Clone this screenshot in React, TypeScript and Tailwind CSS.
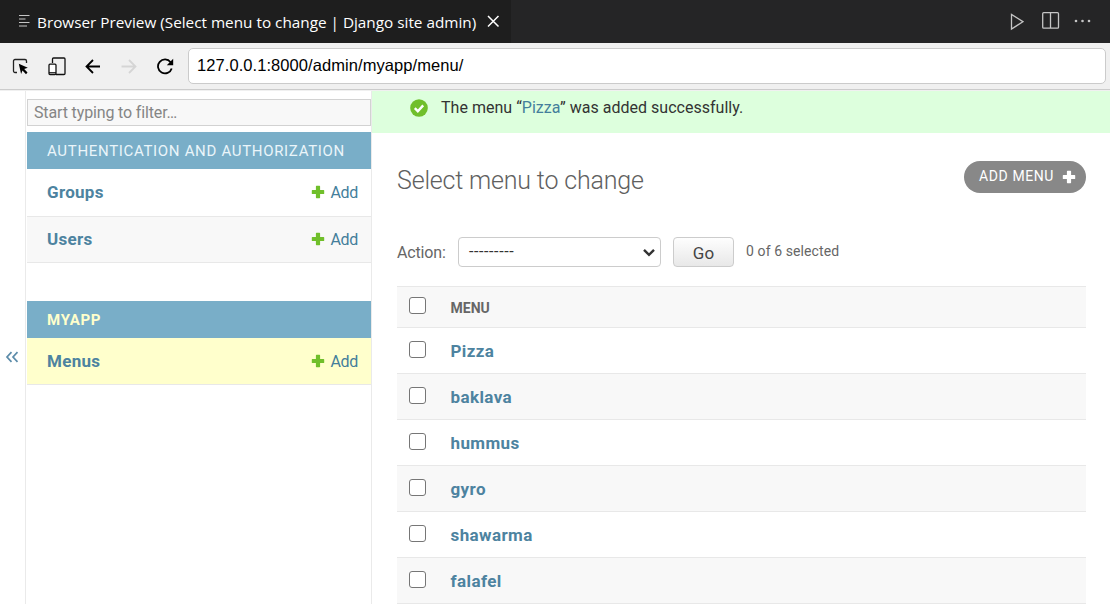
import type { ReactNode } from "react";

const items = ["Pizza", "baklava", "hummus", "gyro", "shawarma", "falafel"];

function Plus({ className }: { className: string }) {
  return (
    <svg viewBox="0 0 14 14" className={className} fill="currentColor">
      <path d="M5.5 0.8h3a.6.6 0 0 1 .6.6v3.5h3.5a.6.6 0 0 1 .6.6v3a.6.6 0 0 1-.6.6H9.100v3.500a.6.6 0 0 1-.6.6h-3a.6.6 0 0 1-.6-.6V9.100H1.400a.6.6 0 0 1-.6-.6v-3a.6.6 0 0 1 .6-.6h3.500V1.400a.6.6 0 0 1 .6-.6z" />
    </svg>
  );
}

function TitleBar() {
  return (
    <header className="flex h-[43px] shrink-0 bg-[#252526] font-['Open_Sans','Noto_Sans',sans-serif] text-white">
      <div className="flex w-[511px] bg-[#1e1e1e] pl-[18px]">
        <svg width="12" height="14" viewBox="0 0 12 14" className="mt-[14px] shrink-0" stroke="#c5c5c5" strokeWidth="1.200">
          <path d="M1 1.500h10.500M1 5h6.500M1 8.500h10.500M1 12h8" />
        </svg>
        <span className="ml-[7px] mt-[10px] w-[442px] whitespace-nowrap text-[15.3px] leading-[24px]">
          Browser Preview (Select menu to change | Django site admin)
        </span>
        <svg width="14" height="14" viewBox="0 0 14 14" className="ml-[7px] mt-[14px] shrink-0" stroke="#fff" strokeWidth="1.500">
          <path d="M2 2l10.500 10.500M12.500 2L2 12.500" />
        </svg>
      </div>
      <div className="ml-auto flex pr-[19px]">
        <svg width="14" height="18" viewBox="0 0 14 18" className="mt-[13px]" fill="none" stroke="#c5c5c5" strokeWidth="1.300">
          <path d="M1.500 1.500v14.500L13 8.700z" />
        </svg>
        <svg width="18" height="18" viewBox="0 0 18 18" className="ml-[18px] mt-[12px]" fill="none" stroke="#c5c5c5" strokeWidth="1.300">
          <rect x=".7" y=".7" width="15.800" height="15.500" rx="1" />
          <path d="M8.500 1v15" />
        </svg>
        <svg width="17" height="4" viewBox="0 0 17 4" className="ml-[14px] mt-[19px]" fill="#c5c5c5">
          <circle cx="2" cy="2" r="1.300" />
          <circle cx="8.500" cy="2" r="1.300" />
          <circle cx="15" cy="2" r="1.300" />
        </svg>
      </div>
    </header>
  );
}

function Toolbar() {
  return (
    <div className="flex h-[47px] shrink-0 border-b border-[#cccccc] bg-[#f0f0f0] pl-[12px] pr-[4px]">
      <svg width="18" height="18" viewBox="0 0 18 18" className="mt-[15px] shrink-0" fill="none" stroke="#222" strokeWidth="1.300">
        <path d="M5 14.500H3A1.500 1.500 0 0 1 1.500 13V3A1.500 1.500 0 0 1 3 1.500h10A1.500 1.500 0 0 1 14.500 3v2" />
        <path d="M6.800 5.800l9 4-3.600 1.300 3.300 3.500-1.500 1.600-3.500-3.600-1.400 3.400z" fill="#000" stroke="none" />
      </svg>
      <svg width="18" height="19" viewBox="0 0 18 19" className="ml-[18px] mt-[14px] shrink-0" fill="none" stroke="#111" strokeWidth="1.300">
        <path d="M4.500 6V2a1 1 0 0 1 1-1h10.500a1 1 0 0 1 1 1v14.500a1 1 0 0 1-1 1H8" />
        <rect x="1" y="7.200" width="7" height="10.400" rx="1" fill="#fff" />
        <path d="M1 15.800h7" />
      </svg>
      <svg width="16" height="15" viewBox="0 0 16 15" className="ml-[19px] mt-[16px] shrink-0" fill="none" stroke="#000" strokeWidth="1.800">
        <path d="M15 7.500H1.500M8 1L1.500 7.500 8 14" />
      </svg>
      <svg width="16" height="15" viewBox="0 0 16 15" className="ml-[20px] mt-[16px] shrink-0" fill="none" stroke="#d5d5d5" strokeWidth="1.800">
        <path d="M.5 7.500h14M8 1l6.500 6.500L8 14" />
      </svg>
      <svg width="18" height="17" viewBox="0 0 18 17" className="ml-[19px] mt-[15px] shrink-0" fill="none" stroke="#000" strokeWidth="1.800">
        <path d="M15.700 10.500a7 7 0 1 1-1.100-6.300" />
        <path d="M17.200.8v6.400h-6.400z" fill="#000" stroke="none" />
      </svg>
      <div className="ml-[14px] mt-[5px] h-[36px] flex-1 rounded-[5px] border border-[#cbcbcb] bg-white pl-[8px] font-['Liberation_Sans',sans-serif] text-[16.5px] leading-[33px] tracking-[0.07px] text-black">
        127.0.0.1:8000/admin/myapp/menu/
      </div>
    </div>
  );
}

function ModelRow({ name, className }: { name: string; className: string }) {
  return (
    <div className={`flex items-center border-b border-[#e8e8e8] pl-[20px] pr-[13px] text-[#447e9b] ${className}`}>
      <span className="text-[17px] font-bold leading-[24px] tracking-[0.3px] text-[#4d83a0]">{name}</span>
      <Plus className="ml-auto size-[14px] text-[#70bf2b]" />
      <span className="ml-[5px] pt-px text-[16px] leading-[24px] tracking-[-0.3px]">Add</span>
    </div>
  );
}

function Caption({ children, className }: { children: ReactNode; className: string }) {
  return <div className={`h-[37px] whitespace-nowrap bg-[#79aec8] pl-[20px] text-[15px] leading-[38px] ${className}`}>{children}</div>;
}

function Sidebar() {
  return (
    <div className="flex w-[372px] shrink-0">
      <div className="w-[26px] border-r border-[#eaeaea] pl-[5px] pt-[259px]">
        <svg width="14" height="14" viewBox="0 0 14 14" fill="none" stroke="#5b8ba9" strokeWidth="1.700">
          <path d="M6.500 2.200L2 7l4.500 4.800M12.500 2.200L8 7l4.500 4.800" />
        </svg>
      </div>
      <nav className="w-[346px] border-r border-[#eaeaea] pl-px pt-[8px]">
        <div className="h-[27px] border border-[#d2d2d2] bg-[#f8f8f8] pl-[6px] text-[16px] leading-[26px] tracking-[-0.14px] text-[#858585]">Start typing to filter…</div>
        <Caption className="mt-[6px] tracking-[0.68px] text-[#eaf5fa]">AUTHENTICATION AND AUTHORIZATION</Caption>
        <ModelRow name="Groups" className="h-[48px] pb-px" />
        <ModelRow name="Users" className="h-[46px] bg-[#f8f8f8] pb-px" />
        <Caption className="mt-[38px] font-bold tracking-[0.7px] text-[#ffffcc]">MYAPP</Caption>
        <ModelRow name="Menus" className="h-[47px] bg-[#ffffcc]" />
      </nav>
    </div>
  );
}

function Checkbox() {
  return <span className="block size-[17px] shrink-0 rounded-[3px] border border-[#767676] bg-white" />;
}

function ChangeList() {
  return (
    <main className="flex min-w-0 flex-1 flex-col">
      <div className="flex h-[42px] shrink-0 bg-[#ddffdd] pl-[38px]">
        <svg width="18" height="18" viewBox="0 0 18 18" className="mt-[8px]">
          <circle cx="9" cy="9" r="8.800" fill="#70bf2b" />
          <path d="M4.800 9.200l3 3 5.400-5.800" fill="none" stroke="#fff" strokeWidth="2.400" />
        </svg>
        <span className="ml-[13px] mt-[5px] text-[16px] leading-[24px] tracking-[0.02px] text-[#333]">
          The menu “<span className="text-[#447e9b]">Pizza</span>” was added successfully.
        </span>
      </div>
      <div className="pl-[25px] pr-[24px]">
        <div className="flex h-[104px] justify-between">
          <h1 className="mt-[30px] text-[25px] font-light leading-[35px] tracking-[-0.18px] text-[#606060]">Select menu to change</h1>
          <div className="mt-[28px] flex h-[32px] w-[122px] items-center rounded-full bg-[#888] pl-[15px] text-[14px] tracking-[0.6px] text-white">
            <span className="-mt-[2px]">ADD MENU</span>
            <Plus className="ml-[8px] size-[14px]" />
          </div>
        </div>
        <div className="flex h-[49px] text-[#666]">
          <span className="w-[61px] text-[16px] leading-[31px] tracking-[-0.15px]">Action:</span>
          <div className="flex h-[30px] w-[203px] items-center rounded-[4px] border border-[#ccc] bg-white pl-[10px] pr-[4px] text-[16px] text-[#333]">
            <span className="text-[16px] leading-[28px] tracking-[0.6px]">---------</span>
            <svg width="14" height="9" viewBox="0 0 14 9" className="ml-auto" fill="none" stroke="#333" strokeWidth="2.400">
              <path d="M2 1.800l5 5 5-5" />
            </svg>
          </div>
          <div className="ml-[12px] h-[30px] w-[61px] rounded-[4px] border border-[#ccc] bg-linear-to-b from-[#fefefe] to-[#e8e8e8] text-center text-[17px] leading-[30px] text-[#444]">Go</div>
          <span className="ml-[12px] text-[14px] leading-[28px] tracking-[0.1px]">0 of 6 selected</span>
        </div>
        <div className="border-t border-[#e8e8e8]">
          <div className="flex h-[41px] border-b border-[#e8e8e8] bg-[#f8f8f8] pl-[12px]">
            <div className="mt-[10px]"><Checkbox /></div>
            <span className="ml-[24.5px] text-[14px] font-bold leading-[42px] text-[#666]">MENU</span>
          </div>
          {items.map((item) => (
            <div key={item} className="flex h-[46px] border-b border-[#e8e8e8] pl-[12px] even:bg-white odd:bg-[#f8f8f8]">
              <div className="mt-[13px]"><Checkbox /></div>
              <span className="ml-[24.5px] text-[17px] font-bold leading-[47px] tracking-[0.4px] text-[#4d83a0]">{item}</span>
            </div>
          ))}
        </div>
      </div>
    </main>
  );
}

export default function App() {
  return (
    <div className="flex h-[604px] w-[1110px] flex-col overflow-hidden bg-white font-[Roboto,sans-serif]">
      <TitleBar />
      <Toolbar />
      <div className="flex min-h-0 flex-1 border-t border-[#f0f0f0]">
        <Sidebar />
        <ChangeList />
      </div>
    </div>
  );
}
